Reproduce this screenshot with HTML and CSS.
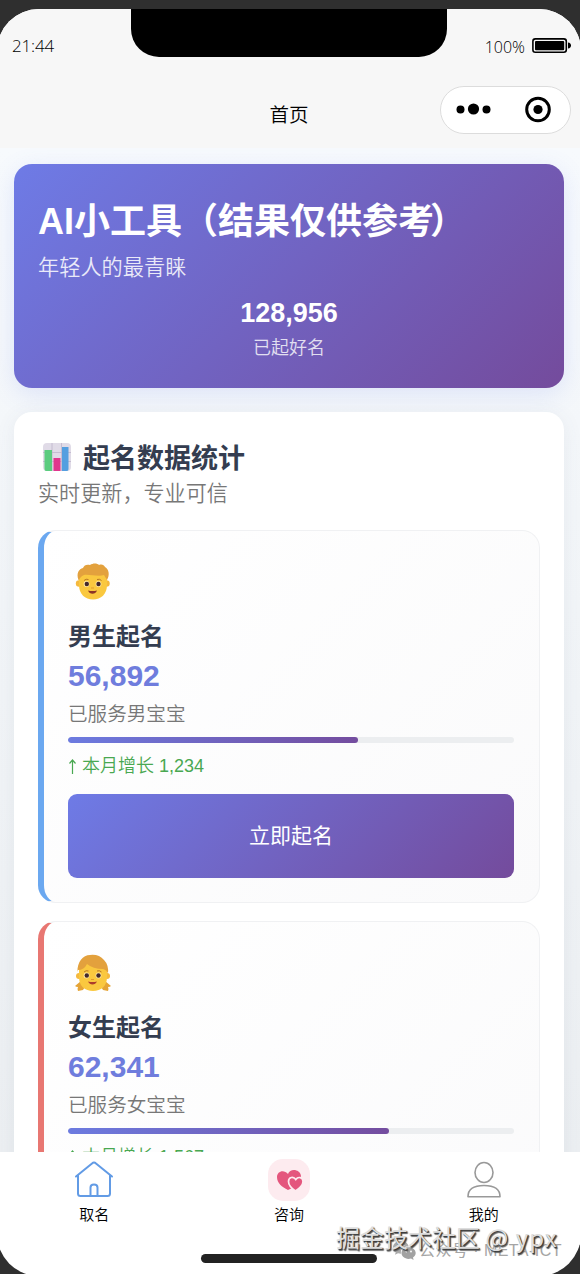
FILE: index.html
```
<!DOCTYPE html>
<html lang="zh-CN">
<head>
<meta charset="utf-8">
<title>首页</title>
<link rel="stylesheet" href="styles.css">
</head>
<body>
<div class="phone">
  <header class="top">
    <div class="notch"></div>
    <div class="status">
      <span class="clock">21:44</span>
      <span class="power"><span class="percent">100%</span>
        <svg width="40" height="16" viewBox="0 0 40 16"><rect x=".9" y=".9" width="33.4" height="13.4" rx="2.5" fill="none" stroke="#000" stroke-width="1.6"/><rect x="3" y="3" width="29.2" height="9.2" rx="1"/><path d="M36 4.6c4 0 4 6 0 6z"/></svg>
      </span>
    </div>
    <div class="nav">
      <h1 class="nav-title">首页</h1>
      <div class="capsule">
        <svg width="130" height="48" viewBox="0 0 130 48"><circle cx="19.500" cy="23.500" r="4"/><circle cx="32.500" cy="23" r="5.600"/><circle cx="45.500" cy="23.500" r="4"/><circle cx="97" cy="23.500" r="11.300" fill="none" stroke="#000" stroke-width="3"/><circle cx="97" cy="23.500" r="4.600"/></svg>
      </div>
    </div>
  </header>

  <main class="page">
    <section class="hero">
      <h2 class="hero-title">AI小工具（结果仅供参考<span class="close">）</span></h2>
      <p class="hero-sub">年轻人的最青睐</p>
      <p class="hero-num">128,956</p>
      <p class="hero-label">已起好名</p>
    </section>

    <section class="panel">
      <h2 class="panel-title">
        <svg class="chart" width="28" height="28" viewBox="0 0 28 28"><rect width="28" height="28" rx="4" fill="#e0dbe7"/><path d="M0 9.500h28M0 18.500h28M9 0v28M18.500 0v28" stroke="#beb5cb" stroke-width=".8"/><path d="M1.500 7h7.500v21h-6q-1.500 0-1.500-2z" fill="#5bcc7f"/><path d="M10.500 15h7v13h-7z" fill="#e0368d"/><path d="M19 4h6.500v22q0 2-1.500 2h-5z" fill="#549fe0"/></svg>
        <span>起名数据统计</span>
      </h2>
      <p class="panel-sub">实时更新，专业可信</p>

      <article class="card boy">
        <svg class="face" width="36" height="38" viewBox="0 0 36 38"><circle cx="4" cy="20.500" r="3.200" fill="#f5b93e"/><circle cx="31.500" cy="20.500" r="3.200" fill="#f5b93e"/><path d="M4 17C4 7 10 4 18 4s14 4 14 13v5c0 9-6 14.500-14 14.500S4 31 4 22z" fill="#fac83f"/><path d="M3.500 17C1 10 4 6 8 5c1-3 4-4 7-3 3-2 7-2 9 0 3-1 5 0 6 2 4 2 5 8 2 13-1-2-2-3-3-5-5 2-16-1-20 0-3 1-4 3-5 5z" fill="#e3a13d"/><path d="M9 17.500q2-2 4.500-1M22 16.500q2.500-1 4.500 1" fill="none" stroke="#b87828" stroke-width="1"/><circle cx="11.500" cy="21" r="2.900" fill="#ffe9a6"/><circle cx="23.500" cy="21" r="2.900" fill="#ffe9a6"/><circle cx="11.800" cy="21" r="2.200" fill="#43282b"/><circle cx="23.500" cy="21" r="2.200" fill="#43282b"/><path d="M16 25h3" stroke="#e39b2b"/><path d="M13 27.500q4.500 1 9 0-1.500 3.200-4.500 3.200T13 27.500z" fill="#8c3426"/></svg>
        <h3 class="card-title">男生起名</h3>
        <p class="card-num">56,892</p>
        <p class="card-sub">已服务男宝宝</p>
        <div class="bar"><div class="fill" style="width:65%"></div></div>
        <p class="growth"><svg width="9" height="17" viewBox="0 0 9 17"><path d="M4.500 16V2M1.500 5.500l3-3.500 3 3.500" fill="none" stroke="currentColor" stroke-width="1.200"/></svg> 本月增长 1,234</p>
        <button class="btn">立即起名</button>
      </article>

      <article class="card girl">
        <svg class="face" width="36" height="38" viewBox="0 0 36 38"><path d="M6 27l-6 5q1 1 3 1-1 2 0 4l5-1 3-5zM30 27l6 5q-1 1-3 1 1 2 0 4l-5-1-3-5z" fill="#e5a436"/><circle cx="4" cy="22" r="3" fill="#f5b93e"/><circle cx="32" cy="22" r="3" fill="#f5b93e"/><path d="M4 17C4 7 10 4 18 4s14 4 14 13v6c0 9-6 14-14 14S4 32 4 23z" fill="#fac83f"/><path d="M2.500 18C2 8 8 1 15 1q9-1 14 5 5 5 4 14-1-4-5-5-10 0-16-5-3 6-9 6z" fill="#e3a13d"/><path d="M9 18q2-2 4.500-1M22 17q2.500-1 4.500 1" fill="none" stroke="#b87828"/><circle cx="11.500" cy="21.500" r="2.900" fill="#ffe9a6"/><circle cx="23.500" cy="21.500" r="2.900" fill="#ffe9a6"/><circle cx="11.800" cy="21.500" r="2.200" fill="#43282b"/><circle cx="23.500" cy="21.500" r="2.200" fill="#43282b"/><path d="M16 25.500h3" stroke="#e39b2b"/><path d="M13 27.500q4.500 1 9 0-1.500 3-4.500 3T13 27.500z" fill="#ad3c2b"/></svg>
        <h3 class="card-title">女生起名</h3>
        <p class="card-num">62,341</p>
        <p class="card-sub">已服务女宝宝</p>
        <div class="bar"><div class="fill" style="width:72%"></div></div>
        <p class="growth"><svg width="9" height="17" viewBox="0 0 9 17"><path d="M4.500 16V2M1.500 5.500l3-3.500 3 3.500" fill="none" stroke="currentColor" stroke-width="1.200"/></svg> 本月增长 1,567</p>
        <button class="btn">立即起名</button>
      </article>
    </section>
  </main>

  <nav class="tabs">
    <a class="tab">
      <svg width="42" height="42" viewBox="0 0 42 42" fill="none" stroke="#629be5" stroke-width="2" stroke-linecap="round" stroke-linejoin="round"><path d="M3 17.500L19 4.500Q21 2.500 23 4.500L39 17.500M5 16V34.500Q5 37 7.500 37H34.500Q37 37 37 34.500V16M17.500 37V28.500Q17.500 25.500 21 25.500T24.500 28.500V37"/></svg>
      <span>取名</span>
    </a>
    <a class="tab">
      <svg width="42" height="42" viewBox="0 0 42 42"><rect width="42" height="42" rx="15" fill="#fdebef"/><path d="M20 31C14 28 9 24 9 18c0-6 7-8 11-3 2-6 12-5 13 2 1 7-6 11-13 14z" fill="#e4567d"/><path d="M27.500 32C23 29 20.500 26 20.500 22.500c0-4.500 5-5.500 7.300-2 2.500-3.500 7.200-2 7.200 2C35 26 32 29 27.500 32z" fill="#e4567d" stroke="#fdebef" stroke-width="1.700"/></svg>
      <span>咨询</span>
    </a>
    <a class="tab">
      <svg width="42" height="42" viewBox="0 0 42 42" fill="none" stroke="#999" stroke-width="1.600"><ellipse cx="21" cy="13.500" rx="9" ry="10"/><path d="M5 37.700Q5 26.500 21 26.500T37 37.700z" stroke-linejoin="round"/></svg>
      <span>我的</span>
    </a>
  </nav>
  <div class="home-bar"></div>
</div>
<div class="mark account">
  <svg width="23" height="20" viewBox="0 0 23 20"><path d="M8 0C3.500 0 0 2.700 0 6.300c0 2 1 3.700 2.700 4.900L2 13.700l3-1.500 3 .5C7 7 12 5 15.700 5.500 15 2.200 12 0 8 0z" fill="#aaa"/><path d="M15.500 6.300c-4 0-7 2.600-7 5.800s3 5.800 7 5.800l2.500-.4 2.600 1.400-.6-2.300c1.700-1.100 2.700-2.700 2.700-4.500 0-3.200-3.200-5.800-7.200-5.800z" fill="#a2a2a2"/><g fill="#fff"><circle cx="5.500" cy="4.500" r="1"/><circle cx="10.500" cy="4.500" r="1"/><circle cx="13.300" cy="10.500" r=".9"/><circle cx="18" cy="10.500" r=".9"/></g></svg>
  <span>公众号 · META-ICT</span>
</div>
<div class="mark author">掘金技术社区 <span class="handle">@ ypx</span></div>
</body>
</html>
```
FILE: styles.css
```
* { box-sizing: border-box; }
body {
  margin: 0;
  height: 1274px;
  overflow: hidden;
  position: relative;
  padding-top: 9px;
  background: #2f2f2f;
  font-family: "Liberation Sans", "Noto Sans CJK SC", sans-serif;
  font-weight: 350;
}
h1, h2, h3, p { margin: 0; }
svg { display: block; flex: none; }
.phone {
  width: 584px;
  height: 1267px;
  margin-left: -3px;
  border-radius: 42px;
  overflow: hidden;
  background: #fff;
  display: flex;
  flex-direction: column;
}
.top { position: relative; height: 139px; flex: none; background: #f7f7f7; }
.notch {
  position: absolute;
  top: 0;
  left: 134px;
  width: 316px;
  height: 48px;
  border-radius: 0 0 28px 28px;
  background: #000;
}
.status {
  height: 74px;
  padding: 0 9px 0 15px;
  display: flex;
  justify-content: space-between;
  align-items: center;
  font-family: "Open Sans", sans-serif;
  font-weight: 300;
  font-size: 17px;
}
.clock { padding-bottom: 2px; letter-spacing: -.15px; }
.power { display: flex; align-items: center; gap: 7px; font-size: 16px; }
.percent { padding-top: 1px; }
.nav {
  height: 54px;
  display: grid;
  grid-template-columns: 1fr auto 1fr;
  align-items: center;
}
.nav-title { grid-column: 2; font-size: 19.500px; font-weight: 350; line-height: 40px; padding-top: 10px; }
.capsule {
  justify-self: end;
  width: 131px;
  height: 48px;
  margin-right: 10px;
  margin-bottom: 1px;
  border: 1.500px solid #dcdcdc;
  border-radius: 24px;
  background: #fff;
  display: flex;
  align-items: center;
  overflow: hidden;
}
.page {
  height: 1004px;
  flex: none;
  overflow: hidden;
  padding: 16px 17px 0;
  background: linear-gradient(180deg, #f7fafd 0%, #eceff2 100%);
}
.hero {
  height: 224px;
  padding: 35px 24px 0;
  border-radius: 18px;
  color: #fff;
  background: linear-gradient(135deg, #6e7be6 0%, #744b9c 100%);
  box-shadow: 0 6px 24px rgba(102, 126, 234, .16);
}
.hero-title { font-size: 36px; line-height: 46px; font-weight: 700; white-space: nowrap; }
.close { margin-left: -4px; }
.hero-sub { font-size: 21.200px; line-height: 30px; margin-top: 8px; opacity: .85; }
.hero-num { font-size: 27px; line-height: 34px; font-weight: 700; margin-top: 13px; text-align: center; }
.hero-label { font-size: 18px; line-height: 28px; margin-top: 4px; text-align: center; opacity: .8; }
.panel {
  height: 900px;
  margin-top: 24px;
  padding: 27px 24px 0;
  border-radius: 18px;
  background: #fff;
  box-shadow: 0 3px 20px rgba(80, 90, 110, .08);
}
.panel-title {
  display: flex;
  align-items: center;
  gap: 12px;
  padding-left: 5px;
  height: 36px;
  font-size: 27px;
  line-height: 36px;
  font-weight: 700;
  color: #343d50;
}
.panel-title span { padding-top: 3px; }
.panel-sub { font-size: 21.100px; line-height: 30px; margin-top: 4px; color: #777; }
.card {
  height: 373px;
  margin-top: 21px;
  padding: 32px 25px 0 24px;
  border: 1px solid #f0f1f3;
  border-left-width: 6px;
  border-radius: 18px;
  background: linear-gradient(135deg, #fff 0%, #fafafb 100%);
}
.card + .card { margin-top: 18px; }
.boy { border-left-color: #6ba8f0; }
.girl { border-left-color: #e87772; }
.face { margin-left: 7px; }
.card-title { font-size: 24px; line-height: 32px; margin-top: 20px; font-weight: 700; color: #343d50; }
.card-num { font-size: 30px; line-height: 38px; margin-top: 4px; font-weight: 700; color: #6f7ddd; }
.card-sub { font-size: 19.600px; line-height: 28px; margin-top: 5px; color: #777; }
.bar { height: 6px; margin-top: 9px; border-radius: 3px; background: #eceef0; overflow: hidden; }
.fill { height: 6px; border-radius: 3px; background: linear-gradient(90deg, #6c7be0, #744d9f); }
.growth {
  display: flex;
  align-items: center;
  gap: 5px;
  height: 26px;
  margin-top: 10px;
  font-size: 18px;
  line-height: 26px;
  color: #49a851;
}
.btn {
  display: block;
  width: 100%;
  height: 84px;
  margin-top: 15px;
  border: 0;
  border-radius: 9px;
  background: linear-gradient(135deg, #6e7be6 0%, #744b9c 100%);
  color: #fff;
  font: 400 21px/30px "Liberation Sans", "Noto Sans CJK SC", sans-serif;
}
.tabs { height: 93px; flex: none; display: grid; grid-template-columns: repeat(3, 1fr); background: #fff; }
.tab { display: flex; flex-direction: column; align-items: center; padding-top: 7px; }
.tab span { font-size: 15px; line-height: 22px; margin-top: 3px; color: #000; }
.home-bar { width: 176px; height: 9px; flex: none; margin: 9px auto 0; border-radius: 5px; background: #222; }
.mark { position: absolute; white-space: nowrap; }
.account {
  top: 1240px;
  left: 393px;
  display: flex;
  align-items: center;
  gap: 3px;
  font-size: 16px;
  line-height: 22px;
  font-weight: 400;
  letter-spacing: .45px;
  color: #a5a5a5;
}
.author {
  top: 1220px;
  left: 336px;
  font-family: "Noto Sans CJK SC", sans-serif;
  font-size: 24px;
  line-height: 34px;
  font-weight: 400;
  color: #ddd;
  text-shadow: 1px 1px 1px #333, 1.500px 1.500px 1px #666;
}
.handle { letter-spacing: 1.100px; }
```
